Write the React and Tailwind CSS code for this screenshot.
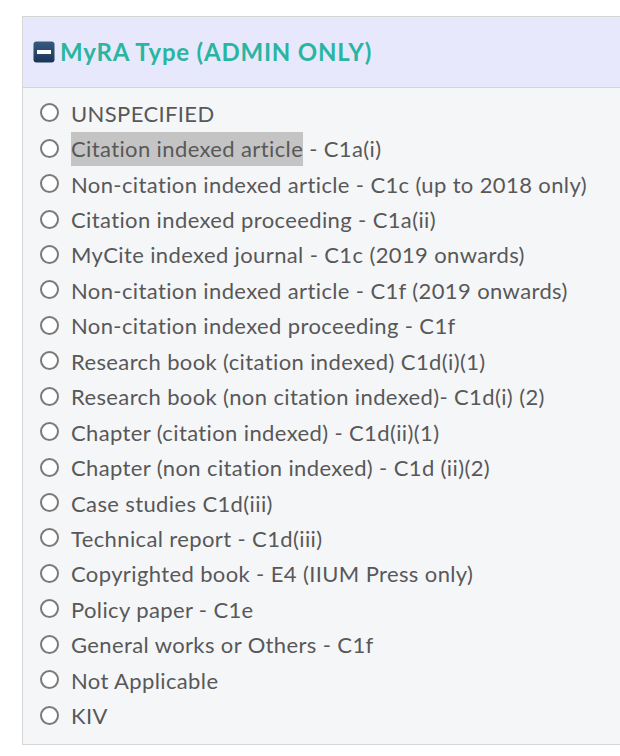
import React from 'react'

const options = [
  'UNSPECIFIED',
  'Citation indexed article - C1a(i)',
  'Non-citation indexed article - C1c (up to 2018 only)',
  'Citation indexed proceeding - C1a(ii)',
  'MyCite indexed journal - C1c (2019 onwards)',
  'Non-citation indexed article - C1f (2019 onwards)',
  'Non-citation indexed proceeding - C1f',
  'Research book (citation indexed) C1d(i)(1)',
  'Research book (non citation indexed)- C1d(i) (2)',
  'Chapter (citation indexed) - C1d(ii)(1)',
  'Chapter (non citation indexed) - C1d (ii)(2)',
  'Case studies C1d(iii)',
  'Technical report - C1d(iii)',
  'Copyrighted book - E4 (IIUM Press only)',
  'Policy paper - C1e',
  'General works or Others - C1f',
  'Not Applicable',
  'KIV',
]

const MinusBox = () => (
  <svg width="22" height="22" viewBox="0 0 22 22" className="shrink-0">
    <defs>
      <linearGradient id="mb" x1="0" y1="0" x2="0" y2="1">
        <stop offset="0" stopColor="#35597f" />
        <stop offset="1" stopColor="#1b3655" />
      </linearGradient>
    </defs>
    <rect x="0.5" y="0.5" width="21" height="21" rx="3" fill="url(#mb)" />
    <rect x="4" y="9" width="14" height="4" fill="#ffffff" />
  </svg>
)

export default function App() {
  return (
    <div className="w-[620px] h-[756px] bg-white overflow-hidden pt-[16px] pl-[22px]" style={{ fontFamily: 'Lato, "Open Sans", sans-serif' }}>
      <div className="w-[620px] border border-[#d6d6d6] bg-[#f5f6f8]">
        {/* Header */}
        <div className="h-[71px] bg-[#e8e8fc] border-b border-[#d6d6d6] flex items-center gap-[5px] pl-[10px]">
          <MinusBox />
          <span className="text-[24px] font-bold text-[#29b5a1] tracking-[0.8px]">
            MyRA Type (ADMIN ONLY)
          </span>
        </div>

        {/* Options */}
        <div className="pt-[7px] pb-[11px]">
          {options.map((label, i) => (
            <label key={label} className="h-[35.45px] flex items-center pl-[17px] text-[22px] tracking-[0.38px] text-[#585858]">
              <span className="w-[19px] h-[19px] rounded-full border-2 border-[#7a7a7a] bg-white shrink-0" />
              <span className="ml-[12px] whitespace-nowrap leading-[34px] translate-y-[1px]">
                {i === 1 ? (
                  <>
                    <span className="bg-[#c4c4c4] inline-block">Citation indexed article</span>
                    {' - C1a(i)'}
                  </>
                ) : (
                  label
                )}
              </span>
            </label>
          ))}
        </div>
      </div>
    </div>
  )
}
